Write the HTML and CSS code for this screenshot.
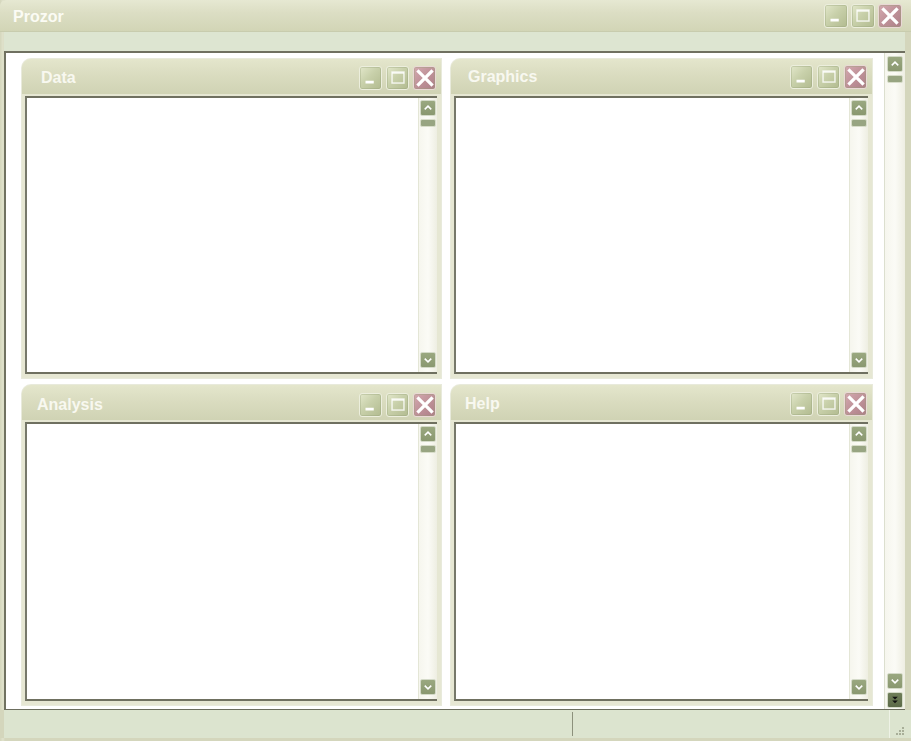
FILE: index.html
```html
<!DOCTYPE html>
<html>
<head>
<meta charset="utf-8">
<link rel="stylesheet" href="styles.css">
</head>
<body>
<div class="window">
  <div class="titlebar">
    <span class="title">Prozor</span>
    <div class="wbtns">
      <span class="wbtn min"><svg viewBox="0 0 24 24"><rect x="6" y="15" width="9" height="3" fill="#fff"/></svg></span>
      <span class="wbtn max"><svg viewBox="0 0 24 24"><rect x="5.5" y="5.5" width="13" height="12" fill="none" stroke="#fff" stroke-opacity="0.8" stroke-width="1.6"/><rect x="5.5" y="5.5" width="13" height="2" fill="#fff" fill-opacity="0.7"/></svg></span>
      <span class="wbtn close"><svg viewBox="0 0 24 24"><path d="M5 5 L19 19 M19 5 L5 19" stroke="#fff" stroke-width="3.6" stroke-linecap="square"/></svg></span>
    </div>
  </div>
  <div class="menubar"></div>
  <div class="desktop">
    <div class="grid">
      <div class="panel">
        <div class="ptitle t-data"><span>Data</span>
          <div class="wbtns small">
            <span class="wbtn min"><svg viewBox="0 0 24 24"><rect x="6" y="15" width="9" height="3" fill="#fff"/></svg></span>
            <span class="wbtn max"><svg viewBox="0 0 24 24"><rect x="5.5" y="5.5" width="13" height="12" fill="none" stroke="#fff" stroke-opacity="0.8" stroke-width="1.6"/><rect x="5.5" y="5.5" width="13" height="2" fill="#fff" fill-opacity="0.7"/></svg></span>
            <span class="wbtn close"><svg viewBox="0 0 24 24"><path d="M5 5 L19 19 M19 5 L5 19" stroke="#fff" stroke-width="3.6" stroke-linecap="square"/></svg></span>
          </div>
        </div>
        <div class="pbody">
          <div class="area"></div>
          <div class="sbar">
            <span class="sbtn"><svg viewBox="0 0 15 15"><path d="M4 9 L7.5 5.5 L11 9" fill="none" stroke="#fff" stroke-width="1.6"/></svg></span>
            <span class="thumb"></span>
            <span class="sgap"></span>
            <span class="sbtn"><svg viewBox="0 0 15 15"><path d="M4 6 L7.5 9.5 L11 6" fill="none" stroke="#fff" stroke-width="1.6"/></svg></span>
          </div>
        </div>
      </div>
      <div class="panel">
        <div class="ptitle t-graphics"><span>Graphics</span>
          <div class="wbtns small">
            <span class="wbtn min"><svg viewBox="0 0 24 24"><rect x="6" y="15" width="9" height="3" fill="#fff"/></svg></span>
            <span class="wbtn max"><svg viewBox="0 0 24 24"><rect x="5.5" y="5.5" width="13" height="12" fill="none" stroke="#fff" stroke-opacity="0.8" stroke-width="1.6"/><rect x="5.5" y="5.5" width="13" height="2" fill="#fff" fill-opacity="0.7"/></svg></span>
            <span class="wbtn close"><svg viewBox="0 0 24 24"><path d="M5 5 L19 19 M19 5 L5 19" stroke="#fff" stroke-width="3.6" stroke-linecap="square"/></svg></span>
          </div>
        </div>
        <div class="pbody">
          <div class="area"></div>
          <div class="sbar">
            <span class="sbtn"><svg viewBox="0 0 15 15"><path d="M4 9 L7.5 5.5 L11 9" fill="none" stroke="#fff" stroke-width="1.6"/></svg></span>
            <span class="thumb"></span>
            <span class="sgap"></span>
            <span class="sbtn"><svg viewBox="0 0 15 15"><path d="M4 6 L7.5 9.5 L11 6" fill="none" stroke="#fff" stroke-width="1.6"/></svg></span>
          </div>
        </div>
      </div>
      <div class="panel">
        <div class="ptitle t-analysis"><span>Analysis</span>
          <div class="wbtns small">
            <span class="wbtn min"><svg viewBox="0 0 24 24"><rect x="6" y="15" width="9" height="3" fill="#fff"/></svg></span>
            <span class="wbtn max"><svg viewBox="0 0 24 24"><rect x="5.5" y="5.5" width="13" height="12" fill="none" stroke="#fff" stroke-opacity="0.8" stroke-width="1.6"/><rect x="5.5" y="5.5" width="13" height="2" fill="#fff" fill-opacity="0.7"/></svg></span>
            <span class="wbtn close"><svg viewBox="0 0 24 24"><path d="M5 5 L19 19 M19 5 L5 19" stroke="#fff" stroke-width="3.6" stroke-linecap="square"/></svg></span>
          </div>
        </div>
        <div class="pbody">
          <div class="area"></div>
          <div class="sbar">
            <span class="sbtn"><svg viewBox="0 0 15 15"><path d="M4 9 L7.5 5.5 L11 9" fill="none" stroke="#fff" stroke-width="1.6"/></svg></span>
            <span class="thumb"></span>
            <span class="sgap"></span>
            <span class="sbtn"><svg viewBox="0 0 15 15"><path d="M4 6 L7.5 9.5 L11 6" fill="none" stroke="#fff" stroke-width="1.6"/></svg></span>
          </div>
        </div>
      </div>
      <div class="panel">
        <div class="ptitle t-help"><span>Help</span>
          <div class="wbtns small">
            <span class="wbtn min"><svg viewBox="0 0 24 24"><rect x="6" y="15" width="9" height="3" fill="#fff"/></svg></span>
            <span class="wbtn max"><svg viewBox="0 0 24 24"><rect x="5.5" y="5.5" width="13" height="12" fill="none" stroke="#fff" stroke-opacity="0.8" stroke-width="1.6"/><rect x="5.5" y="5.5" width="13" height="2" fill="#fff" fill-opacity="0.7"/></svg></span>
            <span class="wbtn close"><svg viewBox="0 0 24 24"><path d="M5 5 L19 19 M19 5 L5 19" stroke="#fff" stroke-width="3.6" stroke-linecap="square"/></svg></span>
          </div>
        </div>
        <div class="pbody">
          <div class="area"></div>
          <div class="sbar">
            <span class="sbtn"><svg viewBox="0 0 15 15"><path d="M4 9 L7.5 5.5 L11 9" fill="none" stroke="#fff" stroke-width="1.6"/></svg></span>
            <span class="thumb"></span>
            <span class="sgap"></span>
            <span class="sbtn"><svg viewBox="0 0 15 15"><path d="M4 6 L7.5 9.5 L11 6" fill="none" stroke="#fff" stroke-width="1.6"/></svg></span>
          </div>
        </div>
      </div>
    </div>
    <div class="sbar mainbar">
      <span class="sbtn"><svg viewBox="0 0 15 15"><path d="M4 9 L7.5 5.5 L11 9" fill="none" stroke="#fff" stroke-width="1.6"/></svg></span>
      <span class="thumb"></span>
      <span class="sgap"></span>
      <span class="sbtn"><svg viewBox="0 0 15 15"><path d="M4 6 L7.5 9.5 L11 6" fill="none" stroke="#fff" stroke-width="1.6"/></svg></span>
      <span class="sbtn dark"><svg viewBox="0 0 15 15"><path d="M4.5 4 L10.5 4 L7.5 7 Z M4.5 8 L10.5 8 L7.5 11 Z" fill="#111"/></svg></span>
    </div>
  </div>
  <div class="statusbar">
    <div class="cell c1"></div>
    <div class="cell c2"></div>
    <div class="grip"><svg viewBox="0 0 12 12"><g fill="#a8ae98"><rect x="9" y="3" width="2" height="2"/><rect x="6" y="6" width="2" height="2"/><rect x="9" y="6" width="2" height="2"/><rect x="3" y="9" width="2" height="2"/><rect x="6" y="9" width="2" height="2"/><rect x="9" y="9" width="2" height="2"/></g></svg></div>
  </div>
</div>
</body>
</html>
```

FILE: styles.css
```css
* { box-sizing: border-box; }
html, body { margin: 0; padding: 0; }
body {
  width: 911px;
  height: 741px;
  overflow: hidden;
  background: #d8dac2;
  font-family: "Liberation Sans", Arial, sans-serif;
}
.window {
  width: 911px;
  height: 741px;
  display: flex;
  flex-direction: column;
  background: linear-gradient(to right, #d4d6bc 0, #e0e2cc 3px, #d4d6bc 5px);
}
.titlebar {
  height: 32px;
  flex: none;
  display: flex;
  align-items: center;
  justify-content: space-between;
  padding: 0 9px 0 13px;
  border-radius: 6px 0 0 0;
  background: linear-gradient(to bottom, #e6e8d2 0%, #dcdec4 40%, #d2d5b6 100%);
  border-bottom: 1px solid #c8ccae;
}
.title {
  color: #fbfbf4;
  font-weight: bold;
  font-size: 16px;
  margin-top: 2px;
}
.wbtns { display: flex; gap: 3px; }
.wbtn {
  width: 24px;
  height: 24px;
  border-radius: 3px;
  border: 1px solid #eceedd;
  display: block;
  background: linear-gradient(135deg, #e2e7ca 0%, #c8d0aa 45%, #b2bb90 100%);
  box-shadow: inset 0 0 0 1px rgba(150,160,120,0.35);
}
.wbtn svg { display: block; width: 22px; height: 22px; }
.wbtn.close {
  background: linear-gradient(135deg, #d4aab0 0%, #c1949b 45%, #ad7f87 100%);
  border-color: #ead8d6;
}
.menubar {
  height: 21px;
  flex: none;
  background: #dde5d1;
  margin: 0 6px 0 4px;
  border-bottom: 2px solid #6f7060;
}
.desktop {
  flex: 1;
  display: flex;
  margin: 0 6px 0 4px;
  background: #fff;
  border-left: 2px solid #707261;
  border-bottom: 1px solid #6c6e5e;
  min-height: 0;
}
.grid {
  flex: 1;
  display: grid;
  grid-template-columns: 419px 421px;
  grid-template-rows: 319px 320px;
  column-gap: 10px;
  row-gap: 7px;
  padding: 6px 0 0 16px;
}
.panel {
  display: flex;
  flex-direction: column;
  background: #e6e7d3;
  border-radius: 9px 0 0 0;
  padding: 0 4px 4px 3px;
  box-shadow: 0 0 0 1px #e8eadb;
}
.ptitle {
  height: 35px;
  flex: none;
  margin: 0 -4px 0 -3px;
  display: flex;
  align-items: center;
  justify-content: space-between;
  padding: 1px 5px 0 19px;
  border-radius: 9px 0 0 0;
  background: linear-gradient(to bottom, #e4e6cc 0%, #dadcc0 45%, #d0d3b4 100%);
  color: #f8f8f0;
  font-weight: bold;
  font-size: 16px;
}
.ptitle span { margin-top: 2px; }
.t-graphics { padding-left: 17px; }
.t-graphics span { margin-top: 0; }
.t-analysis { padding-left: 15px; }
.t-analysis span { margin-top: 4px; }
.t-help { padding-left: 14px; }
.t-help span { margin-top: 2px; }
.wbtns.small { gap: 4px; }
.wbtns.small .wbtn { width: 23px; height: 24px; }
.pbody {
  flex: 1;
  margin-top: 2px;
  display: flex;
  border-top: 2px solid #6f7060;
  border-left: 2px solid #76786a;
  border-bottom: 2px solid #6f7060;
  min-height: 0;
}
.area { flex: 1; background: #fff; }
.sbar {
  width: 19px;
  flex: none;
  display: flex;
  flex-direction: column;
  align-items: center;
  padding: 2px 0 4px;
  background: linear-gradient(to right, #f6f6ee 0%, #fbfbf6 50%, #eeeee2 100%);
  border-left: 1px solid #e4e6d6;
}
.sbtn {
  width: 16px;
  height: 16px;
  flex: none;
  display: block;
  border: 1px solid #d4dac8;
  border-radius: 2px;
  background: linear-gradient(to bottom, #9aa880 0%, #8a9870 100%);
}
.sbtn svg { display: block; width: 14px; height: 14px; }
.sbtn.dark {
  margin-top: 3px;
  background: linear-gradient(to bottom, #6f7e58 0%, #5c6a48 100%);
}
.thumb {
  width: 16px;
  height: 8px;
  margin-top: 3px;
  border: 1px solid #d8ddca;
  border-radius: 2px;
  background: #98a582;
  flex: none;
}
.sgap { flex: 1; }
.mainbar {
  width: 21px;
  padding: 3px 0 1px;
  border-left: 1px solid #dcdfcf;
}
.statusbar {
  height: 28px;
  flex: none;
  display: flex;
  background: #dce4cf;
  margin: 0 0 3px 0;
  border-left: 4px solid #d4d6bc;
}
.cell { height: 100%; }
.c1 { width: 569px; border-right: 1px solid #8c917c; margin: 2px 0; height: auto; }
.c2 { flex: 1; }
.grip { width: 22px; display: flex; align-items: flex-end; justify-content: flex-end; padding: 0 6px 2px 0; border-left: 1px solid #eef2e6; }
.grip svg { width: 12px; height: 12px; display: block; }
```
